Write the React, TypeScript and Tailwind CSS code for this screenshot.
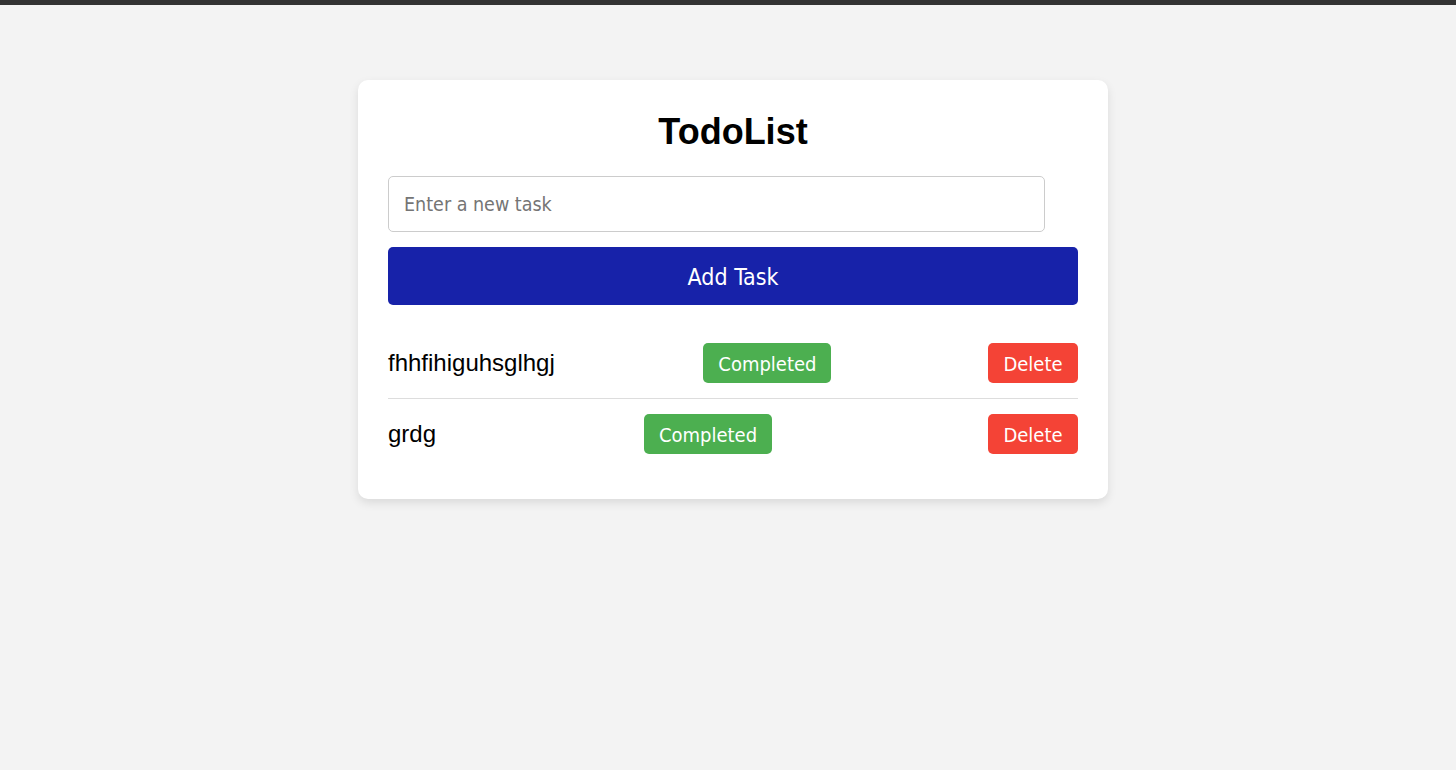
import * as React from "react";

type Task = { id: number; text: string };

const initialTasks: Task[] = [
  { id: 1, text: "fhhfihiguhsglhgj" },
  { id: 2, text: "grdg" },
];

export default function App() {
  const [tasks, setTasks] = React.useState<Task[]>(initialTasks);
  const [value, setValue] = React.useState("");

  const addTask = () => {
    if (!value.trim()) return;
    setTasks((prev) => [...prev, { id: Date.now(), text: value.trim() }]);
    setValue("");
  };

  const removeTask = (id: number) => setTasks((prev) => prev.filter((task) => task.id !== id));

  return (
    <div className="min-h-[770px] bg-[#f3f3f3] font-['Liberation_Sans',Arial,sans-serif]">
      <div className="h-[5px] bg-[#333333]" />
      <div className="pl-[10px] pt-[75px]">
        <div className="mx-auto w-[750px] rounded-[10px] bg-white p-[30px] shadow-[0_4px_10px_rgba(0,0,0,0.1)]">
          <h1 className="mb-[24px] pt-[2px] text-center text-[36px] font-bold leading-[40px] text-black">TodoList</h1>
          <input
            value={value}
            onChange={(e) => setValue(e.target.value)}
            placeholder="Enter a new task"
            className="block h-[56px] w-[657px] rounded-[5px] border border-[#cccccc] px-[15px] pt-[1px] font-['DejaVu_Sans',sans-serif] text-[19.5px] text-black outline-none [font-stretch:condensed] placeholder:text-[#757575]"
          />
          <button
            type="button"
            onClick={addTask}
            className="mt-[15px] block h-[58px] w-full rounded-[5px] bg-[#1722a9] pt-[3px] font-['DejaVu_Sans',sans-serif] text-[23px] text-white [font-stretch:condensed]"
          >
            Add Task
          </button>
          <ul className="mt-[23px]">
            {tasks.map((task, index) => (
              <li
                key={task.id}
                className={`flex items-center justify-between py-[15px] ${index < tasks.length - 1 ? "border-b border-[#dddddd]" : ""}`}
              >
                <span className="text-[24px] text-black">{task.text}</span>
                <button
                  type="button"
                  className="h-[40px] w-[128px] rounded-[5px] bg-[#4caf50] pt-[2px] font-['DejaVu_Sans',sans-serif] text-[20px] text-white [font-stretch:condensed]"
                >
                  Completed
                </button>
                <button
                  type="button"
                  onClick={() => removeTask(task.id)}
                  className="ml-[8px] h-[40px] w-[90px] rounded-[5px] bg-[#f44336] pt-[2px] font-['DejaVu_Sans',sans-serif] text-[20px] text-white [font-stretch:condensed]"
                >
                  Delete
                </button>
              </li>
            ))}
          </ul>
        </div>
      </div>
    </div>
  );
}
